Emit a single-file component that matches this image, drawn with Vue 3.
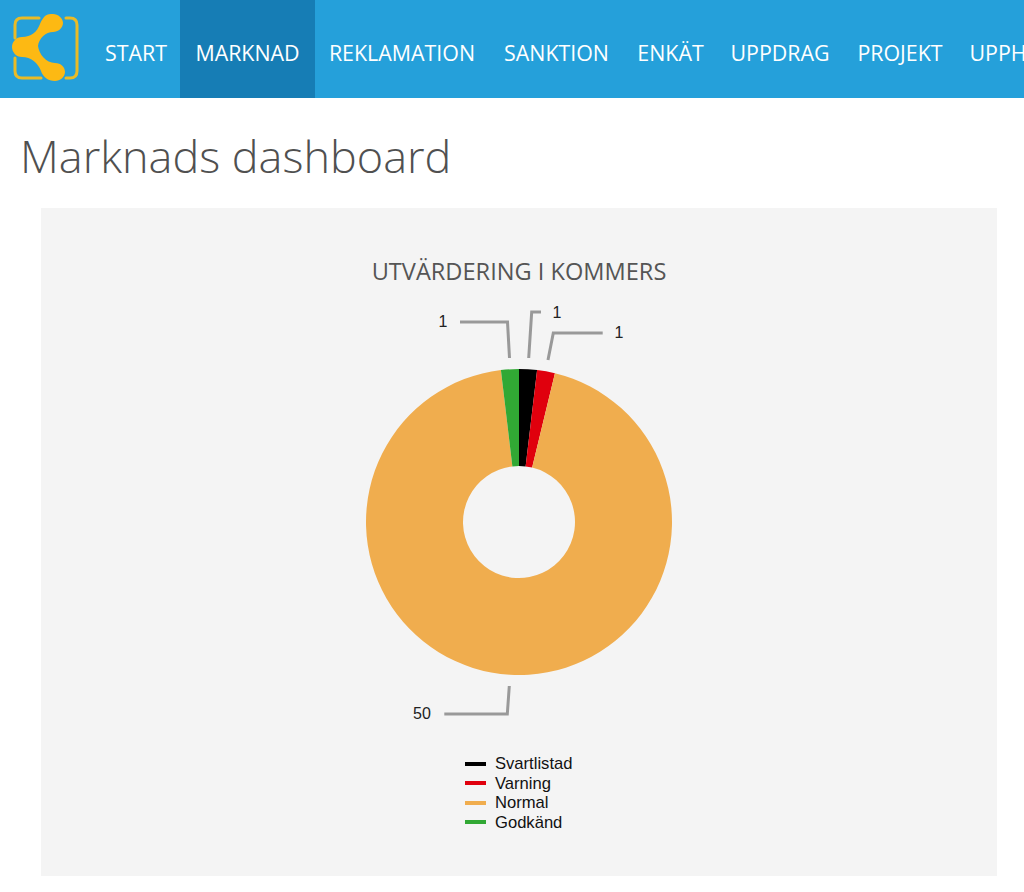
<script setup>
import { computed } from "vue";

const navItems = [
  { label: "START", width: 88 },
  { label: "MARKNAD", width: 135, active: true },
  { label: "REKLAMATION", width: 174 },
  { label: "SANKTION", width: 135 },
  { label: "ENKÄT", width: 93 },
  { label: "UPPDRAG", width: 126 },
  { label: "PROJEKT", width: 114 },
  { label: "UPPHANDLING", width: 176 }
];

const series = [
  { name: "Svartlistad", value: 1, color: "#000000" },
  { name: "Varning", value: 1, color: "#e0000d" },
  { name: "Normal", value: 50, color: "#f0ad4e" },
  { name: "Godkänd", value: 1, color: "#31a834" }
];

const leaders = [
  { points: "419,34 466.5,34 468.5,70", label: "1", x: 402, y: 39 },
  { points: "500,24 490.7,24 487.7,70", label: "1", x: 516, y: 30 },
  { points: "561.7,45 512.3,45 507,72", label: "1", x: 578, y: 50 },
  { points: "403.3,426 466.3,426 468.3,398", label: "50", x: 381, y: 431 }
];

const cx = 478;
const cy = 234;
const outer = 153;
const inner = 56;

const point = (radius, angle) => {
  const rad = (angle * Math.PI) / 180;
  return `${cx + radius * Math.sin(rad)} ${cy - radius * Math.cos(rad)}`;
};

const slices = computed(() => {
  const total = series.reduce((sum, s) => sum + s.value, 0);
  let angle = 0;
  return series.map((s) => {
    const start = angle;
    angle += (s.value / total) * 360;
    const large = angle - start > 180 ? 1 : 0;
    return {
      color: s.color,
      d: `M${point(outer, start)} A${outer} ${outer} 0 ${large} 1 ${point(outer, angle)} L${point(inner, angle)} A${inner} ${inner} 0 ${large} 0 ${point(inner, start)} Z`
    };
  });
});
</script>

<template>
  <div class="page">
    <nav class="navbar">
      <a class="brand" href="#">
        <svg width="68" height="72" viewBox="0 0 68 72">
          <g fill="none" stroke="#eabb26" stroke-width="3" stroke-linecap="round">
            <path d="M28 6H11Q4 6 4 13V26" />
            <path d="M4 46V59Q4 66 11 66H30" />
            <path d="M55 6H59Q66 6 66 13V59Q66 66 59 66H55" />
          </g>
          <path
            fill="#fdb913"
            d="M34 4C37 2 39 2 42 2C47 2 52 6 52 11C52 16 47 20 42 20C35 20 28 26 27 34C28 42 35 51 44 51C50 51 54 55 54 60C54 65 49 69 44 69C37 69 32 65 30 59C27 51 20 45 11 45C5 45 1 40 1 35C1 30 5 25 11 25C20 25 26 20 29 12C30 9 32 6 34 4Z"
          />
        </svg>
      </a>
      <ul class="nav-list">
        <li
          v-for="item in navItems"
          :key="item.label"
          :class="['nav-item', { 'nav-item--active': item.active }]"
          :style="{ width: `${item.width}px` }"
        >
          {{ item.label }}
        </li>
      </ul>
    </nav>

    <h1 class="page-title">Marknads dashboard</h1>

    <section class="panel">
      <h2 class="chart-title">UTVÄRDERING I KOMMERS</h2>
      <svg class="chart" width="956" height="466" viewBox="0 0 956 466">
        <path v-for="slice in slices" :key="slice.color" :d="slice.d" :fill="slice.color" />
        <template v-for="line in leaders" :key="line.points">
          <polyline :points="line.points" fill="none" stroke="#999999" stroke-width="3" />
          <text :x="line.x" :y="line.y" text-anchor="middle" class="chart-label">{{ line.label }}</text>
        </template>
      </svg>
      <ul class="legend">
        <li v-for="s in series" :key="s.name" class="legend-row">
          <span class="legend-key" :style="{ background: s.color }"></span>
          {{ s.name }}
        </li>
      </ul>
    </section>
  </div>
</template>

<style>
html,
body {
  margin: 0;
  background: #ffffff;
  overflow: hidden;
}
</style>

<style scoped>
.page {
  width: 1024px;
  height: 892px;
  overflow: hidden;
  font-family: "Open Sans", "Liberation Sans", sans-serif;
}

.navbar {
  display: flex;
  height: 98px;
  background: #25a0da;
  overflow: hidden;
}

.brand {
  display: flex;
  flex: none;
  width: 92px;
  padding: 12px 0 0 11px;
  box-sizing: border-box;
}

.nav-list {
  display: flex;
  flex: none;
  margin: 0;
  padding: 0;
  list-style: none;
}

.nav-item {
  display: flex;
  align-items: center;
  justify-content: center;
  flex: none;
  padding-top: 6px;
  color: #ffffff;
  font-size: 21.4px;
  white-space: nowrap;
}

.nav-item--active {
  background: #167db5;
}

.page-title {
  margin: 28px 0 0 20px;
  color: #505050;
  font-size: 45px;
  font-weight: 300;
  line-height: 60px;
}

.panel {
  margin: 22px 27px 0 41px;
  height: 668px;
  padding-top: 46px;
  box-sizing: border-box;
  background: #f4f4f4;
}

.chart-title {
  margin: 0;
  color: #555555;
  font-size: 23.6px;
  font-weight: 400;
  line-height: 34px;
  text-align: center;
}

.chart {
  display: block;
}

.chart-label {
  font-family: "Liberation Sans", Arial, sans-serif;
  font-size: 16px;
  fill: #222222;
}

.legend {
  display: flex;
  flex-direction: column;
  width: fit-content;
  margin: 0 0 0 424px;
  padding: 0;
  list-style: none;
  font-family: "Liberation Sans", Arial, sans-serif;
  font-size: 16.6px;
  line-height: 19.5px;
  color: #111111;
}

.legend-row {
  display: flex;
  align-items: center;
  gap: 9px;
}

.legend-key {
  width: 21px;
  height: 4px;
}
</style>
